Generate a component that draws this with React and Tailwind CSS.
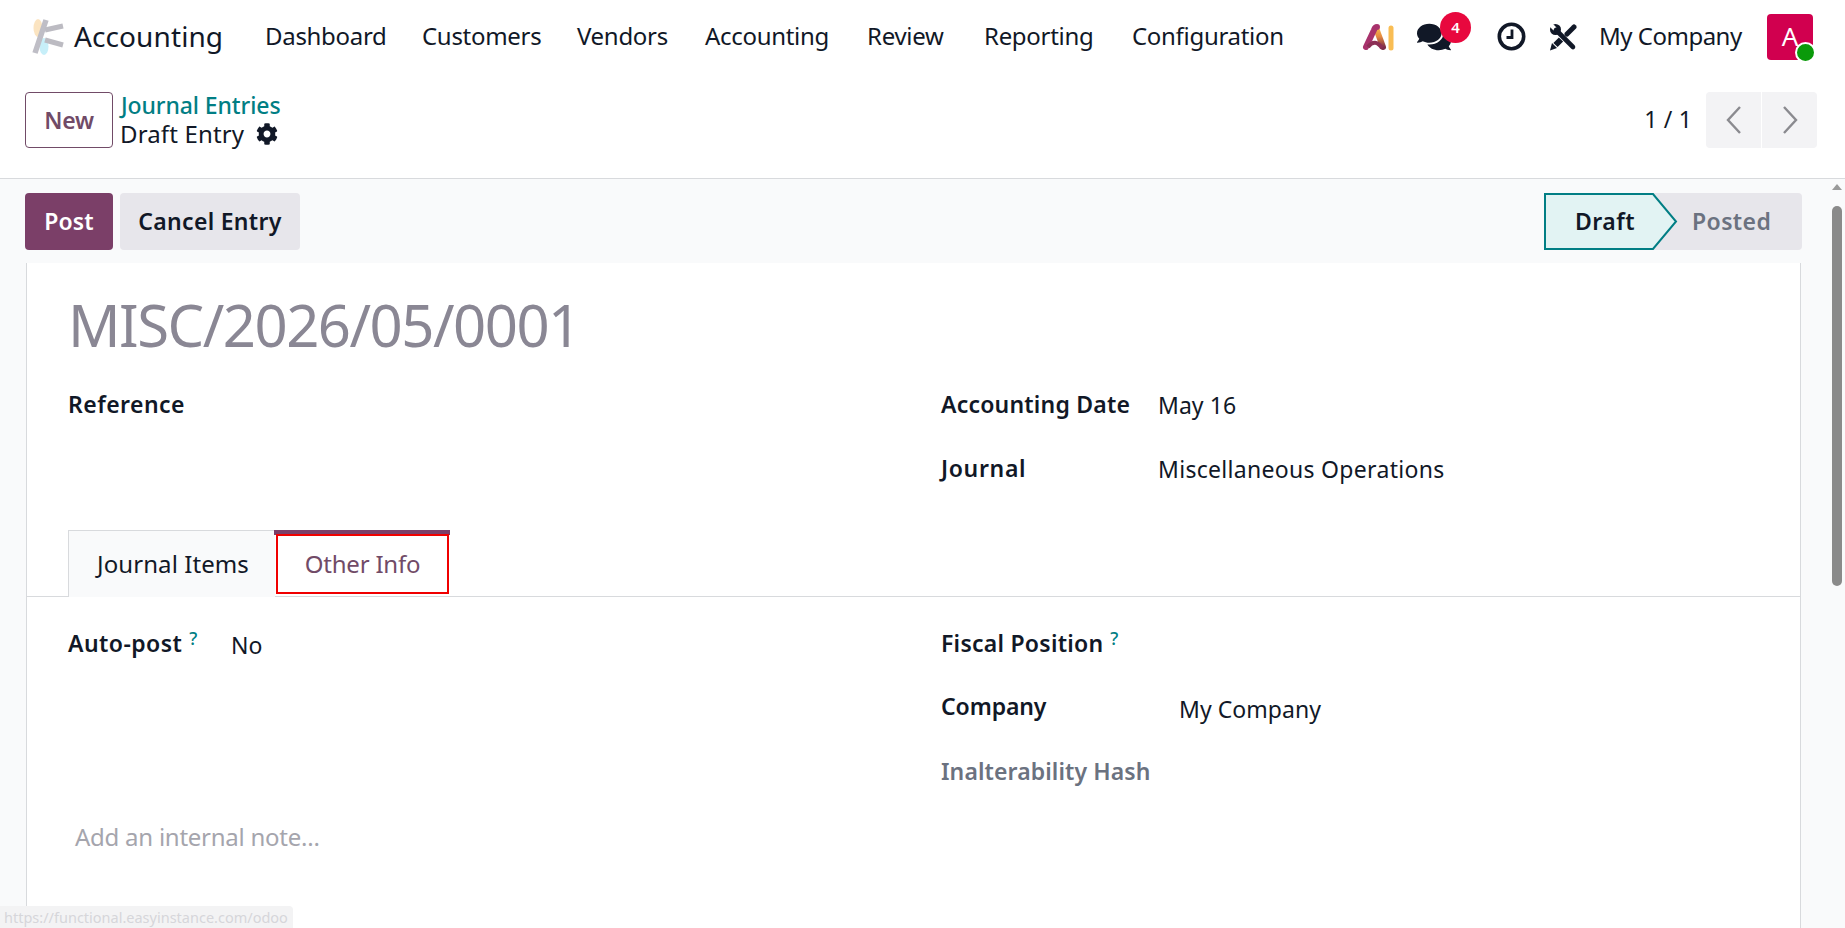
import React from "react";
import { FaComments, FaCog } from "react-icons/fa";

const FONT = "font-['Noto_Sans',sans-serif]";

function AppLogo() {
  return (
    <svg width="36" height="40" viewBox="0 0 36 40" className="opacity-90">
      <ellipse cx="8" cy="11" rx="4.5" ry="9" fill="#fbe2bb" />
      <ellipse cx="14" cy="29.5" rx="4.5" ry="8.5" fill="#c2eef9" />
      <path d="M16 3 L5 36" stroke="#b9b8c0" strokeWidth="5.5" />
      <path d="M15 13 L33 9" stroke="#b5b4bc" strokeWidth="5" />
      <path d="M15 23 L33 28" stroke="#b5b4bc" strokeWidth="5" />
    </svg>
  );
}

function AiLogo() {
  return (
    <svg width="34" height="28" viewBox="0 0 34 28">
      <defs>
        <linearGradient id="aiRight" x1="0" y1="0" x2="0" y2="1">
          <stop offset="0" stopColor="#f7b94f" />
          <stop offset="0.45" stopColor="#e5893f" />
          <stop offset="1" stopColor="#7c2d4a" />
        </linearGradient>
      </defs>
      <path d="M15 5 L22 24" fill="none" stroke="url(#aiRight)" strokeWidth="6" strokeLinecap="round" />
      <path d="M5 24 L13 7 Q14 4 16 4" fill="none" stroke="#a8326c" strokeWidth="6" strokeLinecap="round" />
      <path d="M7 24 Q14 15 21 25" fill="none" stroke="#8c2f55" strokeWidth="4" />
      <path d="M30 5 L30 25" fill="none" stroke="#f9bd54" strokeWidth="5" strokeLinecap="round" />
    </svg>
  );
}

function ClockIcon() {
  return (
    <svg width="29" height="29" viewBox="0 0 29 29" className="ml-[-3px]">
      <circle cx="14.5" cy="14.5" r="12.2" fill="none" stroke="#111827" strokeWidth="3.6" />
      <path d="M15 7.5 V15.5 H9.5" fill="none" stroke="#111827" strokeWidth="2.8" />
    </svg>
  );
}

function ToolsIcon() {
  return (
    <svg width="28" height="28" viewBox="0 0 28 28" className="ml-[-2px]">
      <circle cx="6.5" cy="6.5" r="5.5" fill="#111827" />
      <polygon points="0,3 3,0 7.5,4.5 4.5,7.5" fill="#ffffff" />
      <path d="M7 7 L24 24" stroke="#111827" strokeWidth="4.6" strokeLinecap="round" />
      <path d="M25 4 L18 11" stroke="#111827" strokeWidth="5" strokeLinecap="round" />
      <path d="M12 16.5 L6.5 22" stroke="#111827" strokeWidth="6" />
      <polygon points="3,20 8,25 1,27.5" fill="#111827" />
    </svg>
  );
}

function Nav() {
  const items = [
    ["Dashboard", "w-[157px]"],
    ["Customers", "w-[155px]"],
    ["Vendors", "w-[128px]"],
    ["Accounting", "w-[162px]"],
    ["Review", "w-[117px]"],
    ["Reporting", "w-[148px]"],
    ["Configuration", "w-[160px]"],
  ];
  return (
    <div className="h-[73px] flex items-center bg-white text-[#111827] shrink-0">
      <div className="ml-[30px] w-[36px] flex items-center"><AppLogo /></div>
      <div className="ml-[8px] w-[191px] text-[28px] tracking-[0.1px] pb-[2px]">Accounting</div>
      <div className="flex text-[24px] tracking-[-0.3px] pb-[2px]">
        {items.map(([t, w]) => (
          <div key={t} className={w}>{t}</div>
        ))}
      </div>
      <div className="flex-1" />
      <div className="w-[56px] flex ml-[-1px]"><AiLogo /></div>
      <div className="relative w-[83px]">
        <FaComments className="text-[#111827] w-[34px] h-[32px]" />
        <div className="absolute left-[23px] top-[-9px] w-[31px] h-[31px] rounded-full bg-[#e8083e] text-white text-[15px] font-semibold flex items-center justify-center">4</div>
      </div>
      <div className="w-[51px]"><ClockIcon /></div>
      <div className="w-[48px]"><ToolsIcon /></div>
      <div className="text-[24px] tracking-[-0.5px] w-[168px] pb-[2px]">My Company</div>
      <div className="relative w-[46px] h-[46px] rounded-[4px] bg-[#d1004f] text-white text-[26px] flex items-center justify-center mr-[32px]">
        A
        <div className="absolute right-[-3px] bottom-[-3px] w-[21px] h-[21px] rounded-full bg-[#0a9a0a] border-2 border-white" />
      </div>
    </div>
  );
}

function ControlPanel() {
  return (
    <div className="h-[106px] flex items-start bg-white border-b border-[#d8dadd] shrink-0 pl-[25px] pr-[28px] pt-[19px]">
      <button className="w-[88px] h-[56px] rounded-[4px] border border-[#714b67] text-[#714b67] text-[23px] font-semibold bg-white tracking-[-0.2px]">New</button>
      <div className="ml-[7px] mt-[-2px]">
        <div className="pl-[1px] text-[#017e84] text-[23px] font-medium leading-[30px] tracking-[-0.1px]">Journal Entries</div>
        <div className="flex items-center text-[#111827] text-[24px] leading-[27px] tracking-[0.15px]">
          Draft Entry
          <FaCog className="ml-[12px] w-[22px] h-[22px]" />
        </div>
      </div>
      <div className="flex-1" />
      <div className="text-[#111827] text-[23px] mt-[10px] mr-[14px] tracking-[0.2px]">1 / 1</div>
      <div className="flex w-[111px] h-[56px] gap-[1px]">
        <div className="flex-1 bg-[#f3f3f5] rounded-l-[4px] flex items-center justify-center">
          <svg width="18" height="30" viewBox="0 0 18 30"><path d="M15 2 L3 15 L15 28" fill="none" stroke="#8a8a8f" strokeWidth="2.4" /></svg>
        </div>
        <div className="flex-1 bg-[#f3f3f5] rounded-r-[4px] flex items-center justify-center">
          <svg width="18" height="30" viewBox="0 0 18 30"><path d="M3 2 L15 15 L3 28" fill="none" stroke="#8a8a8f" strokeWidth="2.4" /></svg>
        </div>
      </div>
    </div>
  );
}

function ActionRow() {
  return (
    <div className="h-[84px] flex items-start pt-[14px] pl-[25px] pr-[28px] shrink-0">
      <button className="w-[88px] h-[57px] rounded-[4px] bg-[#7b3f68] text-white text-[23px] font-semibold tracking-[0.1px]">Post</button>
      <button className="ml-[7px] w-[180px] h-[57px] rounded-[4px] bg-[#e7e6eb] text-[#111827] text-[23px] font-semibold tracking-[0.3px]">Cancel Entry</button>
      <div className="flex-1" />
      <div className="relative w-[258px] h-[57px] rounded-[4px] bg-[#e7e6eb] flex items-center">
        <svg width="134" height="57" viewBox="0 0 134 57" className="absolute left-0 top-0">
          <path d="M1 1 L109 1 L132 28.5 L109 56 L1 56 Z" fill="#e2f3f3" stroke="#017e84" strokeWidth="2" />
        </svg>
        <div className="relative ml-[31px] w-[117px] text-[23px] font-semibold text-[#111827] tracking-[0.5px]">Draft</div>
        <div className="relative text-[23px] font-semibold text-[#6b7280] tracking-[0.4px]">Posted</div>
      </div>
    </div>
  );
}

function Field({ label, value, labelW, muted, help, track, valueTrack, valueTop, className }) {
  return (
    <div className={"flex items-start " + (className || "")}>
      <div className={"font-semibold text-[23px] leading-[32px] shrink-0 " + (track || "tracking-[0.2px]") + " " + labelW + " " + (muted ? "text-[#6b7280]" : "text-[#111827]")}>
        {label}
        {help && <span className="ml-[7px] text-[18px] font-medium text-[#017e84] relative top-[-7px]">?</span>}
      </div>
      {value && <div className={"text-[23px] leading-[32px] text-[#111827] " + (valueTop || "mt-[2px]") + " " + (valueTrack || "tracking-[0.05px]")}>{value}</div>}
    </div>
  );
}

function Sheet() {
  return (
    <div className="ml-[26px] mr-[29px] flex-1 bg-white border-x border-[#d8dadd]">
      <div className="pl-[41px] pt-[22px] h-[104px] text-[58px] leading-[80px] text-[#8a8794] tracking-[-1.5px]">MISC/2026/05/0001</div>
      <div className="grid grid-cols-[873px_1fr] pl-[41px] h-[163px] pt-[21px]">
        <Field label="Reference" labelW="w-[217px]" track="tracking-[0.45px]" />
        <div className="flex flex-col gap-[31px]">
          <Field label="Accounting Date" labelW="w-[217px]" value="May 16" valueTop="mt-[1px]" />
          <Field label="Journal" labelW="w-[217px]" track="tracking-[0.65px]" value="Miscellaneous Operations" valueTop="mt-[1px]" valueTrack="tracking-[0.3px]" />
        </div>
      </div>
      <div className="h-[67px] border-b border-[#d8dadd] pl-[41px] flex items-stretch">
        <div className="w-[207px] mb-[-1px] pl-[2px] bg-[#f9fafb] border-l border-t border-[#d8dadd] flex items-center justify-center text-[24px] tracking-[0.08px] text-[#111827]">Journal Items</div>
        <div className="relative w-[174px] mr-[-1px]">
          <div className="absolute -left-px -right-px top-0 h-[5px] bg-[#7b3f68]" />
          <div className="absolute left-[1px] right-0 top-[4px] bottom-[2px] border-2 border-[#f00000] flex items-center justify-center text-[24px] tracking-[-0.2px] text-[#714b67]">Other Info</div>
        </div>
      </div>
      <div className="grid grid-cols-[873px_1fr] pl-[41px] pt-[30px]">
        <div>
          <Field label="Auto-post" labelW="w-[163px]" track="tracking-[0.45px]" help value="No" />
          <div className="mt-[160px] ml-[7px] text-[24px] leading-[32px] tracking-[-0.25px] text-[#a5a5ad]">Add an internal note...</div>
        </div>
        <div className="flex flex-col gap-[29px]">
          <Field label="Fiscal Position" labelW="w-[238px]" track="tracking-[0.25px]" help />
          <Field label="Company" labelW="w-[238px]" track="tracking-[-0.1px]" value="My Company" valueTop="mt-[3px]" />
          <Field label="Inalterability Hash" labelW="w-[238px]" track="tracking-[0.1px]" muted className="mt-[1px]" />
        </div>
      </div>
    </div>
  );
}

function Scrollbar() {
  return (
    <div className="w-[15px] shrink-0 flex flex-col items-center pt-[5px] pr-[1px]">
      <div className="w-0 h-0 border-x-[5px] border-x-transparent border-b-[6px] border-b-[#9a9a9a]" />
      <div className="mt-[16px] w-[10px] h-[380px] rounded-full bg-[#8a8a8a]" />
    </div>
  );
}

export default function App() {
  return (
    <div className={"relative w-full h-[928px] overflow-hidden bg-white flex flex-col " + FONT}>
      <Nav />
      <ControlPanel />
      <div className="flex-1 flex min-h-0 bg-[#f9fafb]">
        <div className="flex-1 flex flex-col min-w-0">
          <ActionRow />
          <Sheet />
        </div>
        <Scrollbar />
      </div>
      <div className="absolute left-0 bottom-0 w-[293px] h-[22px] bg-[#f3f3f4] rounded-tr-[4px] pl-[4px] text-[14.5px] leading-[22px] text-[#d6d6da] overflow-hidden whitespace-nowrap">https://functional.easyinstance.com/odoo</div>
    </div>
  );
}
